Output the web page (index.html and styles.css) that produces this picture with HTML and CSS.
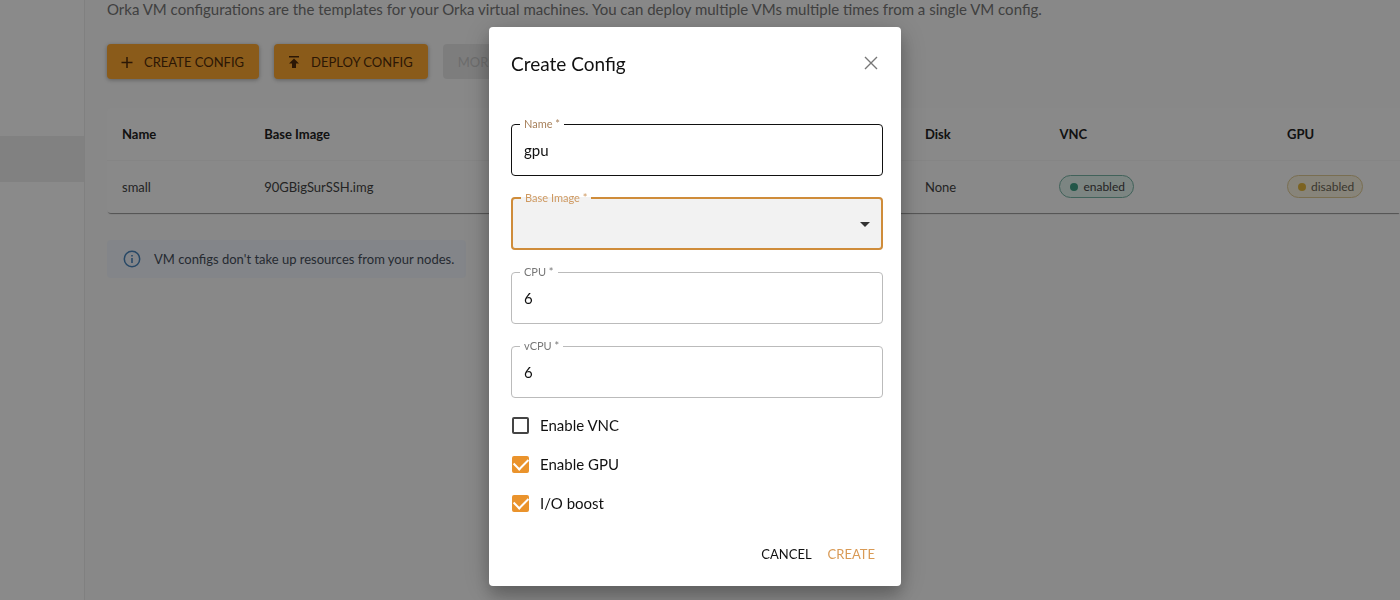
FILE: index.html
```html
<!DOCTYPE html>
<html lang="en">
<head>
    <meta charset="UTF-8">
    <meta name="viewport" content="width=device-width, initial-scale=1.0">
    <title>VM Configs</title>

    <link rel="stylesheet" href="styles.css">
</head>
<body>

    <div class="page">

        <nav class="sidebar">
            <div class="sidebar-active"></div>
        </nav>

        <main class="content">
            <p class="intro">Orka VM configurations are the templates for your Orka virtual machines. You can deploy multiple VMs multiple times from a single VM config.</p>

            <div class="toolbar">
                <button class="btn" type="button">
                    <svg width="16" height="16" viewBox="0 0 16 16"><path d="M8 3v11M2.500 8.500h11" fill="none" stroke="currentColor" stroke-width="1.500"/></svg>
                    CREATE CONFIG
                </button>
                <button class="btn" type="button">
                    <svg width="16" height="16" viewBox="0 0 16 16"><path d="M3 2h10v1.600H3zM8 4.500l5 5h-3V14H6V9.500H3z" fill="currentColor"/></svg>
                    DEPLOY CONFIG
                </button>
                <button class="btn btn-disabled" type="button" disabled>MORE</button>
            </div>

            <div class="card">
                <table class="configs">
                    <thead>
                        <tr>
                            <th class="col-name">Name</th>
                            <th class="col-image">Base Image</th>
                            <th class="col-disk">Disk</th>
                            <th class="col-vnc">VNC</th>
                            <th>GPU</th>
                        </tr>
                    </thead>
                    <tbody>
                        <tr>
                            <td>small</td>
                            <td>90GBigSurSSH.img</td>
                            <td>None</td>
                            <td><span class="chip chip-on">enabled</span></td>
                            <td><span class="chip chip-off">disabled</span></td>
                        </tr>
                    </tbody>
                </table>
            </div>

            <div class="alert">
                <svg width="18" height="18" viewBox="0 0 18 18">
                    <circle cx="9" cy="9" r="7.700" fill="none" stroke="currentColor" stroke-width="1.500"/>
                    <path d="M8.200 8h1.600v5H8.200zM8.200 5h1.600v1.600H8.200z" fill="currentColor"/>
                </svg>
                <span>VM configs don't take up resources from your nodes.</span>
            </div>
        </main>

    </div>

    <div class="overlay">
        <form class="dialog" role="dialog" aria-labelledby="dialog-title">
            <header class="dialog-header">
                <h2 id="dialog-title">Create Config</h2>
                <button class="close" type="button" aria-label="Close">
                    <svg width="14" height="14" viewBox="0 0 14 14"><path d="M1 1l12 12M13 1L1 13" fill="none" stroke="currentColor" stroke-width="1.400"/></svg>
                </button>
            </header>

            <div class="fields">
                <fieldset class="field field-hover">
                    <legend><label for="name">Name *</label></legend>
                    <input type="text" id="name" value="gpu">
                </fieldset>

                <fieldset class="field field-focus">
                    <legend><label for="image">Base Image *</label></legend>
                    <select id="image">
                        <option value=""></option>
                    </select>
                    <svg class="arrow" width="10" height="5" viewBox="0 0 10 5"><path d="M0 0h10L5 5z" fill="currentColor"/></svg>
                </fieldset>

                <fieldset class="field">
                    <legend><label for="cpu">CPU *</label></legend>
                    <input type="text" id="cpu" value="6">
                </fieldset>

                <fieldset class="field">
                    <legend><label for="vcpu">vCPU *</label></legend>
                    <input type="text" id="vcpu" value="6">
                </fieldset>
            </div>

            <div class="checks">
                <label class="check"><input type="checkbox"> Enable VNC</label>
                <label class="check"><input type="checkbox" checked> Enable GPU</label>
                <label class="check"><input type="checkbox" checked> I/O boost</label>
            </div>

            <footer class="actions">
                <button type="button">CANCEL</button>
                <button class="primary" type="submit">CREATE</button>
            </footer>
        </form>
    </div>

</body>
</html>
```
FILE: styles.css
```css
* {
    box-sizing: border-box;
}

body {
    margin: 0;
    font-family: Lato, sans-serif;
    font-size: 13px;
    color: #444;
    background-color: #fbfbfb;
    overflow: hidden;
}

button, input, select {
    font-family: inherit;
}

.page {
    display: flex;
    min-height: 100vh;
}

.sidebar {
    flex: 0 0 85px;
    padding-top: 136px;
    background-color: #fff;
    border-right: 1px solid #ececec;
}

.sidebar-active {
    height: 46px;
    background-color: #efefef;
}

.content {
    flex: 1;
    padding-left: 22px;
}

.intro {
    margin: 0 0 25px;
    font-size: 15px;
    line-height: 19px;
    color: #777;
}

.toolbar {
    display: flex;
    gap: 15px;
}

.btn {
    display: flex;
    align-items: center;
    gap: 9px;
    height: 35px;
    padding: 0 15px 0 12px;
    font-size: 13px;
    color: #522c0a;
    background-color: #ffa830;
    border: none;
    border-radius: 4px;
    box-shadow: 0 1px 4px rgba(0, 0, 0, 0.3);
}

.btn-disabled {
    padding: 0 15px;
    color: #c8c8c8;
    background-color: #e8e8e8;
    box-shadow: none;
}

.card {
    margin-top: 29px;
    background-color: #fdfdfd;
    border-radius: 4px 0 0 4px;
    box-shadow: 0 2px 1px -1px rgba(0, 0, 0, 0.4);
}

.configs {
    width: 100%;
    table-layout: fixed;
    border-collapse: collapse;
}

.configs th, .configs td {
    height: 53px;
    padding: 0 15px;
    text-align: left;
}

.configs th {
    height: 52px;
    color: #222;
    border-bottom: 1px solid #f5f5f5;
}

.col-name {
    width: 11%;
}

.col-image {
    width: 51.1%;
}

.col-disk {
    width: 10.4%;
}

.col-vnc {
    width: 17.6%;
}

.chip {
    display: inline-flex;
    align-items: center;
    gap: 5px;
    height: 23px;
    padding: 0 8px 0 10px;
    font-size: 12px;
    border: 1px solid;
    border-radius: 12px;
}

.chip::before {
    content: "";
    width: 8px;
    height: 8px;
    border-radius: 50%;
}

.chip-on {
    background-color: #e6f5f1;
    border-color: #78b5a6;
}

.chip-on::before {
    background-color: #3fa085;
}

.chip-off {
    color: #6b6656;
    background-color: #faf4e2;
    border-color: #e0cc96;
}

.chip-off::before {
    background-color: #e5b83e;
}

.alert {
    display: inline-flex;
    align-items: center;
    gap: 13px;
    height: 38px;
    margin-top: 27px;
    padding: 0 12px 0 16px;
    color: #474f5c;
    background-color: #f2f6fd;
    border-radius: 4px;
}

.alert svg {
    color: #4a85bd;
}

.overlay {
    position: fixed;
    inset: 0;
    display: flex;
    justify-content: center;
    align-items: flex-start;
    padding: 27px 10px 0 0;
    background-color: rgba(0, 0, 0, 0.46);
}

.dialog {
    width: 412px;
    padding: 21px 18px 14px 22px;
    color: #111;
    background-color: #fff;
    border-radius: 4px;
    box-shadow: 0 10px 16px rgba(0, 0, 0, 0.2), 0 4px 30px rgba(0, 0, 0, 0.2);
}

.dialog-header {
    display: flex;
    justify-content: space-between;
    align-items: center;
    height: 30px;
}

.dialog-header h2 {
    margin: 0;
    font-size: 19px;
    font-weight: 400;
}

.close {
    display: flex;
    padding: 5px;
    color: #777;
    background: none;
    border: none;
}

.fields {
    display: flex;
    flex-direction: column;
    gap: 15px;
    margin-top: 39px;
}

.field {
    position: relative;
    height: 59px;
    margin: 0;
    padding: 0;
    border: 1px solid #bbb;
    border-radius: 4px;
}

.field legend {
    height: 14px;
    margin-left: 8px;
    padding: 0 4px;
    font-size: 11px;
    line-height: 14px;
    color: #777;
}

.field input, .field select {
    display: block;
    width: 100%;
    height: 44px;
    padding: 0 12px 6px;
    font-size: 15px;
    color: #111;
    background: none;
    border: none;
    outline: none;
    appearance: none;
}

.field-hover {
    border-color: #111;
}

.field-hover legend {
    color: #a8815c;
}

.field-focus {
    background-color: #f2f2f2;
    border: 2px solid #cf8c3a;
}

.field-focus legend {
    color: #cf9a62;
}

.arrow {
    position: absolute;
    right: 11px;
    top: 17px;
    color: #333;
}

.checks {
    display: flex;
    flex-direction: column;
    gap: 19px;
    margin-top: 17px;
}

.check {
    display: flex;
    align-items: center;
    gap: 11px;
    height: 20px;
    padding-left: 1px;
    font-size: 15px;
}

.check input {
    display: grid;
    place-items: center;
    width: 17px;
    height: 17px;
    margin: 0;
    border: 2px solid #444;
    border-radius: 2px;
    appearance: none;
}

.check input:checked {
    background-color: #ea932c;
    border-color: #ea932c;
}

.check input:checked::after {
    content: "";
    width: 12px;
    height: 7px;
    margin-bottom: 3px;
    border: solid #fff;
    border-width: 0 0 2px 2px;
    transform: rotate(-45deg);
}

.actions {
    display: flex;
    justify-content: flex-end;
    margin-top: 23px;
}

.actions button {
    height: 36px;
    padding: 0 8px;
    font-size: 13px;
    color: #111;
    background: none;
    border: none;
}

.actions .primary {
    color: #d99a55;
}
```
